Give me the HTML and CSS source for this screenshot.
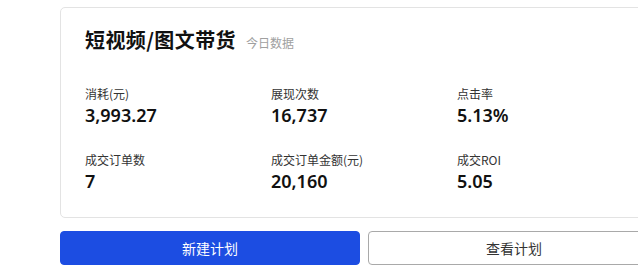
FILE: index.html
```html
<!DOCTYPE html>
<html lang="zh-CN">
<head>
<meta charset="utf-8">
<link rel="stylesheet" href="styles.css">
</head>
<body>
<div class="page">
  <section class="card">
    <div class="head">
      <h1 class="title">短视频/图文带货</h1>
      <span class="sub">今日数据</span>
    </div>
    <div class="grid">
      <div class="stat"><div class="label">消耗(元)</div><div class="value">3,993.27</div></div>
      <div class="stat"><div class="label">展现次数</div><div class="value">16,737</div></div>
      <div class="stat"><div class="label">点击率</div><div class="value">5.13%</div></div>
      <div class="stat"><div class="label">成交订单数</div><div class="value">7</div></div>
      <div class="stat"><div class="label">成交订单金额(元)</div><div class="value">20,160</div></div>
      <div class="stat"><div class="label">成交ROI</div><div class="value">5.05</div></div>
    </div>
  </section>
  <div class="actions">
    <button class="btn primary">新建计划</button>
    <button class="btn ghost">查看计划</button>
  </div>
</div>
</body>
</html>
```
FILE: styles.css
```css
html, body {
  margin: 0;
  padding: 0;
  background: #ffffff;
  overflow: hidden;
}
body {
  font-family: "Noto Sans", "Noto Sans CJK SC", sans-serif;
  color: #1f1f1f;
}
.page {
  box-sizing: border-box;
  padding: 7px 0 0 60px;
  width: 638px;
  height: 269px;
  overflow: hidden;
}
.card {
  box-sizing: border-box;
  width: 620px;
  height: 211px;
  border: 1px solid #e3e3e3;
  border-radius: 5px;
  padding: 18px 0 0 24px;
}
.head {
  display: flex;
  align-items: center;
  height: 28px;
}
.title {
  margin: 0;
  font-family: "Noto Sans CJK SC", sans-serif;
  font-size: 20px;
  font-weight: 700;
  line-height: 28px;
  letter-spacing: 0.4px;
  color: #111;
}
.sub {
  margin-left: 10px;
  margin-top: 4px;
  font-family: "Noto Sans CJK SC", sans-serif;
  font-size: 12px;
  color: #a0a0a0;
}
.grid {
  display: grid;
  grid-template-columns: 186px 186px 186px;
  row-gap: 25px;
  margin-top: 32px;
}
.label {
  font-family: "Noto Sans CJK SC", sans-serif;
  font-size: 12px;
  line-height: 16px;
  color: #333;
}
.value {
  font-family: "Noto Sans", sans-serif;
  font-size: 18px;
  font-weight: 600;
  line-height: 24px;
  margin-top: 1px;
  color: #111;
}
.actions {
  display: flex;
  gap: 8px;
  margin-top: 13px;
}
.btn {
  box-sizing: border-box;
  width: 300px;
  height: 34px;
  border-radius: 4px;
  font-family: "Noto Sans CJK SC", sans-serif;
  font-size: 14px;
  padding: 0;
  flex-shrink: 0;
}
.primary {
  background: #1c4de2;
  border: 1px solid #1c4de2;
  color: #fff;
}
.ghost {
  width: 292px;
  background: #fff;
  border: 1px solid #a9a9a9;
  color: #333;
}
```
